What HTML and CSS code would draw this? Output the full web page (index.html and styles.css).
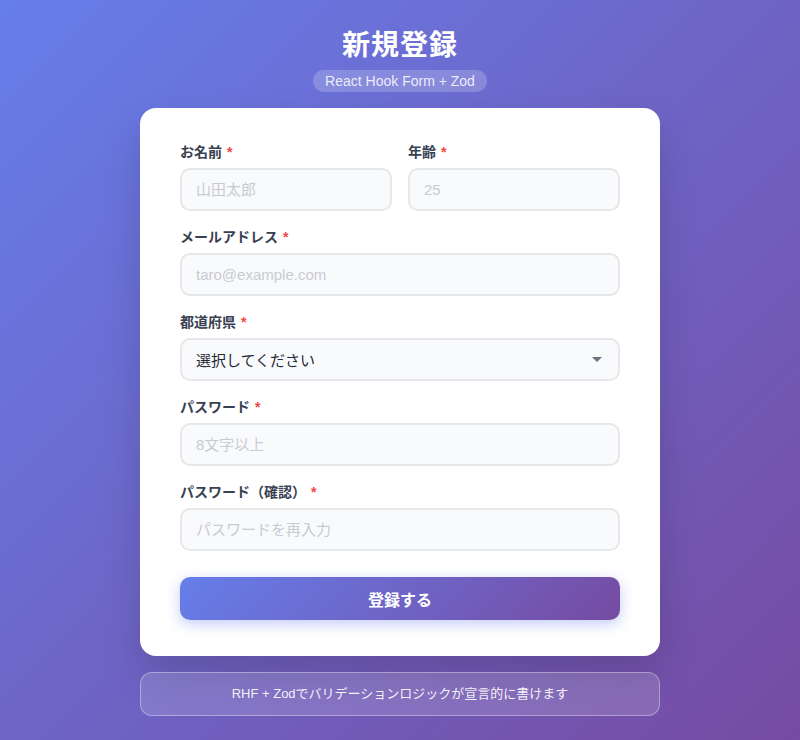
FILE: index.html
```html
<!DOCTYPE html>
<html lang="ja">
<head>
<meta charset="utf-8">
<title>新規登録</title>
<link rel="stylesheet" href="styles.css">
</head>
<body>
<div class="page">
  <h1 class="title">新規登録</h1>
  <div class="subtitle">React Hook Form + Zod</div>
  <form class="card">
    <div class="row">
      <div class="field">
        <label class="label">お名前<span class="req">*</span></label>
        <input class="input" type="text" placeholder="山田太郎">
      </div>
      <div class="field">
        <label class="label">年齢<span class="req">*</span></label>
        <input class="input" type="text" placeholder="25">
      </div>
    </div>
    <div class="field">
      <label class="label">メールアドレス<span class="req">*</span></label>
      <input class="input" type="text" placeholder="taro@example.com">
    </div>
    <div class="field">
      <label class="label">都道府県<span class="req">*</span></label>
      <div class="select">
        <span class="select-text">選択してください</span>
        <span class="caret"></span>
      </div>
    </div>
    <div class="field">
      <label class="label">パスワード<span class="req">*</span></label>
      <input class="input" type="password" placeholder="8文字以上">
    </div>
    <div class="field">
      <label class="label">パスワード（確認）<span class="req">*</span></label>
      <input class="input" type="password" placeholder="パスワードを再入力">
    </div>
    <button class="submit" type="button">登録する</button>
  </form>
  <div class="note">RHF + Zodでバリデーションロジックが宣言的に書けます</div>
</div>
</body>
</html>
```
FILE: styles.css
```css
* { box-sizing: border-box; }
html, body { margin: 0; padding: 0; }
body {
  min-height: 740px;
  background: linear-gradient(135deg, #667eea 0%, #764ba2 100%);
  font-family: "Liberation Sans", "Noto Sans CJK JP", sans-serif;
}
.page {
  width: 520px;
  margin: 0 auto;
  padding-top: 26px;
  display: flex;
  flex-direction: column;
  align-items: center;
}
.title {
  margin: 0;
  font-size: 28px;
  line-height: 34px;
  font-weight: 700;
  color: #fff;
  letter-spacing: 1px;
  font-family: "Noto Sans CJK JP", sans-serif;
}
.subtitle {
  margin-top: 10px;
  height: 22px;
  line-height: 22px;
  padding: 0 12px;
  border-radius: 11px;
  background: rgba(255, 255, 255, 0.2);
  color: rgba(255, 255, 255, 0.85);
  font-size: 14px;
}
.card {
  margin-top: 16px;
  width: 520px;
  background: #fff;
  border-radius: 16px;
  padding: 36px 40px 36px;
  box-shadow: 0 20px 40px rgba(0, 0, 0, 0.15);
  display: flex;
  flex-direction: column;
}
.row {
  display: grid;
  grid-template-columns: 1fr 1fr;
  column-gap: 16px;
}
.field {
  display: flex;
  flex-direction: column;
  margin-bottom: 18px;
}
.label {
  font-size: 14px;
  line-height: 16px;
  font-weight: 700;
  color: #374151;
  margin-bottom: 8px;
}
.req {
  color: #ef4444;
  margin-left: 5px;
}
.input, .select {
  height: 43px;
  border: 2px solid #e5e7eb;
  border-radius: 10px;
  background: #f9fafb;
  padding: 0 14px;
  font-size: 15px;
  font-family: "Liberation Sans", "Noto Sans CJK JP", sans-serif;
  color: #1f2937;
  width: 100%;
  outline: none;
}
.input::placeholder { color: #c8cbd2; }
.select {
  display: flex;
  align-items: center;
  justify-content: space-between;
}
.select-text { color: #1f2937; }
.caret {
  width: 0;
  height: 0;
  border-left: 5px solid transparent;
  border-right: 5px solid transparent;
  border-top: 5px solid #6b7280;
  margin-right: 2px;
}
.submit {
  margin-top: 8px;
  height: 43px;
  border: none;
  border-radius: 10px;
  background: linear-gradient(135deg, #667eea 0%, #764ba2 100%);
  color: #fff;
  font-size: 16px;
  font-weight: 700;
  font-family: "Noto Sans CJK JP", sans-serif;
  box-shadow: 0 4px 14px rgba(102, 126, 234, 0.4);
}
.note {
  margin-top: 16px;
  width: 520px;
  height: 44px;
  line-height: 42px;
  text-align: center;
  border-radius: 12px;
  background: rgba(255, 255, 255, 0.15);
  border: 1px solid rgba(255, 255, 255, 0.35);
  color: rgba(255, 255, 255, 0.92);
  font-size: 13px;
}
```
